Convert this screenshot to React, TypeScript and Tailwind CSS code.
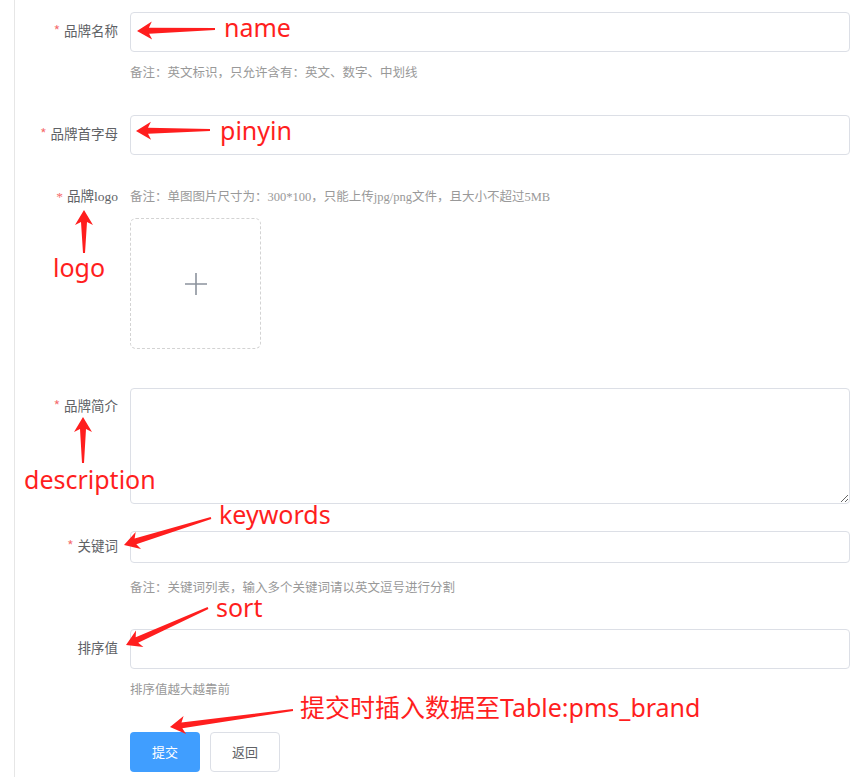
import React from "react";

const CJK = '"Noto Sans CJK SC", sans-serif';
const SERIF_MIX = '"Liberation Serif", "Noto Sans CJK SC", serif';
const ANNO = '"Noto Sans", "Noto Sans CJK SC", sans-serif';

function arrowPoints(
  tx: number,
  ty: number,
  sx: number,
  sy: number,
  head = 15,
  hw = 9,
  sw0 = 3,
  sw1 = 1
) {
  const dx = tx - sx;
  const dy = ty - sy;
  const L = Math.hypot(dx, dy);
  const ux = dx / L;
  const uy = dy / L;
  const nx = -uy;
  const ny = ux;
  const bx = tx - ux * head;
  const by = ty - uy * head;
  const nbx = bx + ux * 3;
  const nby = by + uy * 3;
  const pts = [
    [sx + nx * sw1, sy + ny * sw1],
    [nbx + nx * sw0, nby + ny * sw0],
    [bx + nx * hw, by + ny * hw],
    [tx, ty],
    [bx - nx * hw, by - ny * hw],
    [nbx - nx * sw0, nby - ny * sw0],
    [sx - nx * sw1, sy - ny * sw1],
  ];
  return pts.map((p) => `${p[0].toFixed(1)},${p[1].toFixed(1)}`).join(" ");
}

const arrows: [number, number, number, number][] = [
  [137, 31, 215, 29],
  [136, 131, 210, 130],
  [84, 210, 84, 253],
  [83, 417, 83, 463],
  [124, 545, 211, 518],
  [126, 645, 208, 608],
  [170, 727, 293, 710],
];

const notes: { text: string; left: number; top: number }[] = [
  { text: "name", left: 224, top: 18 },
  { text: "pinyin", left: 220, top: 121 },
  { text: "logo", left: 53, top: 258 },
  { text: "description", left: 24, top: 470 },
  { text: "keywords", left: 219, top: 505 },
  { text: "sort", left: 216, top: 598 },
  { text: "提交时插入数据至Table:pms_brand", left: 300, top: 698 },
];

function Label({
  text,
  required,
  className,
  font,
}: {
  text: string;
  required?: boolean;
  className: string;
  font?: string;
}) {
  return (
    <div
      className={`w-[115px] shrink-0 pr-3 text-right text-[13.5px] text-[#606266] ${className}`}
      style={{ fontFamily: font ?? CJK }}
    >
      {required && <span className="mr-[4px] text-[#f56c6c]">*</span>}
      {text}
    </div>
  );
}

function Note({ children, className = "", font }: { children: React.ReactNode; className?: string; font?: string }) {
  return (
    <div
      className={`text-[12.5px] text-[#999999] whitespace-nowrap ${className}`}
      style={{ fontFamily: font ?? CJK }}
    >
      {children}
    </div>
  );
}

export default function App() {
  return (
    <div className="relative w-[867px] min-h-[777px] bg-white overflow-hidden">
      <div className="ml-[14px] min-h-[777px] border-l border-[#e6e6e6] pr-[17px] pt-[12px]">
        {/* name */}
        <div className="flex">
          <Label text="品牌名称" required className="h-[40px] leading-[37px]" />
          <div className="flex-1">
            <div className="h-[40px] w-full rounded-[4px] border border-[#dcdfe6] bg-white" />
            <Note className="mt-[10px] leading-[20px]">备注：英文标识，只允许含有：英文、数字、中划线</Note>
          </div>
        </div>

        {/* pinyin */}
        <div className="mt-[33px] flex">
          <Label text="品牌首字母" required className="h-[40px] leading-[37px]" />
          <div className="flex-1">
            <div className="h-[40px] w-full rounded-[4px] border border-[#dcdfe6] bg-white" />
          </div>
        </div>

        {/* logo */}
        <div className="mt-[32px] flex">
          <Label text="品牌logo" required className="h-[20px] leading-[20px]" font={SERIF_MIX} />
          <div className="flex-1">
            <Note className="leading-[20px]" font={SERIF_MIX}>
              备注：单图图片尺寸为：300*100，只能上传jpg/png文件，且大小不超过5MB
            </Note>
            <div className="mt-[11px] flex h-[131px] w-[131px] items-center justify-center rounded-[6px] border border-dashed border-[#d3d3d3] bg-white">
              <svg width="24" height="24" viewBox="0 0 24 24">
                <path d="M12 1v22M1 12h22" stroke="#8c939d" strokeWidth="1.6" fill="none" />
              </svg>
            </div>
          </div>
        </div>

        {/* description */}
        <div className="mt-[39px] flex">
          <Label text="品牌简介" required className="h-[38px] leading-[35px]" />
          <div className="flex-1">
            <textarea
              className="block h-[116px] w-full rounded-[4px] border border-[#dcdfe6] bg-white outline-none"
              readOnly
            />
          </div>
        </div>

        {/* keywords */}
        <div className="mt-[27px] flex">
          <Label text="关键词" required className="h-[32px] leading-[29px]" />
          <div className="flex-1">
            <div className="h-[32px] w-full rounded-[4px] border border-[#dcdfe6] bg-white" />
            <Note className="mt-[15px] leading-[18px]">备注：关键词列表，输入多个关键词请以英文逗号进行分割</Note>
          </div>
        </div>

        {/* sort */}
        <div className="mt-[33px] flex">
          <Label text="排序值" className="h-[40px] leading-[37px]" />
          <div className="flex-1">
            <div className="h-[40px] w-full rounded-[4px] border border-[#dcdfe6] bg-white" />
            <Note className="mt-[10px] leading-[20px]">排序值越大越靠前</Note>
          </div>
        </div>

        {/* buttons */}
        <div className="mt-[33px] flex">
          <div className="w-[115px] shrink-0" />
          <div className="flex gap-[10px]" style={{ fontFamily: CJK }}>
            <button className="h-[40px] w-[70px] rounded-[4px] bg-[#409eff] text-[13px] text-white">提交</button>
            <button className="h-[40px] w-[70px] rounded-[4px] border border-[#dcdfe6] bg-white text-[13px] text-[#606266]">
              返回
            </button>
          </div>
        </div>
      </div>

      {/* annotations overlay */}
      <svg className="pointer-events-none absolute left-0 top-0" width="867" height="777">
        {arrows.map((a, i) => (
          <polygon key={i} points={arrowPoints(a[0], a[1], a[2], a[3])} fill="#ff1e1e" />
        ))}
      </svg>
      {notes.map((n, i) => (
        <div
          key={i}
          className="pointer-events-none absolute whitespace-nowrap text-[25px] leading-[18px] text-[#ff1e1e]"
          style={{ left: n.left, top: n.top, fontFamily: ANNO }}
        >
          {n.text}
        </div>
      ))}
    </div>
  );
}
